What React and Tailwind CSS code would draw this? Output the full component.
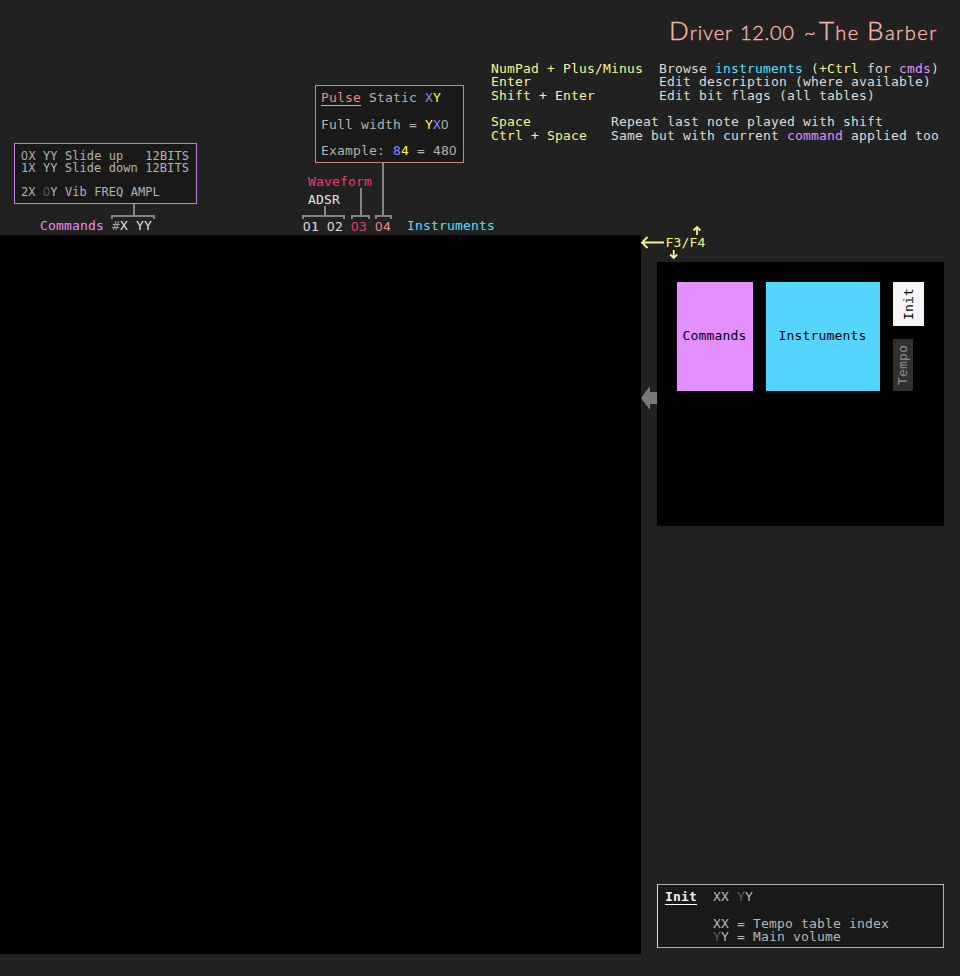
import React from "react";

// Monospaced text whose zeros are drawn plain, without the inner dot.
function Mono({ children, className = "" }) {
  const parts = children.split("0");
  return (
    <span className={className}>
      {parts.map((part, i) => (
        <React.Fragment key={i}>
          {i > 0 && <span className="font-['Noto_Sans',sans-serif] tracking-[0.55px]">0</span>}
          {part}
        </React.Fragment>
      ))}
    </span>
  );
}

function Bracket({ width, height, stem }) {
  const top = height - 4;
  return (
    <svg width={width} height={height} className="block shrink-0" fill="#858585" shapeRendering="crispEdges">
      <rect x={stem} y="0" width="2" height={top} />
      <rect x="0" y={top} width={width} height="2" />
      <rect x="0" y={top} width="2" height="4" />
      <rect x={width - 2} y={top} width="2" height="4" />
    </svg>
  );
}

function CommandsColumn() {
  return (
    <div className="w-[302px] pt-[143px] pl-[14px]">
      <div className="h-[61px] w-[183px] border border-[#c67fe0] bg-[#191919] pt-[6px] pl-[6px] text-[12px] leading-[12px] tracking-[0.08px] text-[#b4b4b4]">
        <div><Mono>0X YY Slide up   12BITS</Mono></div>
        <div><Mono>1X YY Slide down 12BITS</Mono></div>
        <div className="mt-[12px]">
          <Mono>2X </Mono><Mono className="text-[#5c5c5c]">0</Mono><Mono>Y Vib FREQ AMPL</Mono>
        </div>
      </div>
      <div className="pl-[97px]"><Bracket width={44} height={15} stem={22} /></div>
      <div className="pl-[26px] text-[#e48fff]">
        Commands <span className="text-[#e0e0e0]"><span className="text-[#a0a0a0]">#</span>X YY</span>
      </div>
    </div>
  );
}

function InstrumentsColumn() {
  return (
    <div className="w-[189px] pt-[85px]">
      <div className="ml-[13px] h-[78px] w-[149px] border border-[#dc8078] bg-[#191919] pt-[5px] pl-[5px] leading-[13.3px] text-[#b4b4b4]">
        <div><span className="border-b border-[#ff9c90] text-[#f08c84]">Pulse</span> Static <span className="text-[#8888ff]">X</span><span className="text-[#ffff20]">Y</span></div>
        <div className="mt-[13.3px]">Full width = <span className="text-[#ffff20]">Y</span><span className="text-[#8888ff]">X</span><Mono>0</Mono></div>
        <div className="mt-[13.3px]">Example: <span className="text-[#8888ff]">8</span><span className="text-[#ffff20]">4</span> = <Mono>480</Mono></div>
      </div>
      <div className="flex h-[56px]">
        <div className="w-[73px] pt-[12px]">
          <div className="pl-[6px] leading-[13px] text-[#e83c7c]">Waveform</div>
          <div className="flex gap-[6px]">
            <div className="w-[43px]">
              <div className="pt-[5px] pl-[6px] leading-[13px] text-[#e4e4e4]">ADSR</div>
              <Bracket width={43} height={13} stem={22} />
            </div>
            <Bracket width={19} height={31} stem={9} />
          </div>
        </div>
        <Bracket width={17} height={56} stem={7} />
      </div>
      <div className="flex pl-[1px] text-[#e4e4e4]">
        <Mono className="w-[24px] shrink-0">01</Mono>
        <Mono className="w-[24px] shrink-0">02</Mono>
        <Mono className="w-[24px] shrink-0 text-[#e83c7c]">03</Mono>
        <Mono className="w-[32px] shrink-0 text-[#f08c84]">04</Mono>
        <span className="text-[#54e0fa]">Instruments</span>
      </div>
    </div>
  );
}

function Title() {
  return (
    <h1 className="flex h-[62px] w-[271px] items-baseline self-end pt-[15px] font-['Lato',sans-serif] text-[20px] leading-[30px] font-light text-[#ffb4ac] [-webkit-text-stroke:0.35px_#ffb4ac]">
      <span className="w-[71px] shrink-0 tracking-[0.9px]"><span className="text-[26px]">D</span>river</span>
      <span className="w-[64px] shrink-0 tracking-[0.7px]">12.00</span>
      <span className="w-[15px] shrink-0">~</span>
      <span className="w-[48px] shrink-0 tracking-[1.3px]"><span className="text-[26px]">T</span>he</span>
      <span className="tracking-[1.5px]"><span className="text-[26px]">B</span>arber</span>
    </h1>
  );
}

function Shortcuts() {
  return (
    <div className="leading-[13.33px] text-[#dcdcdc]">
      <div><span className="text-[#f6f68e]">NumPad + Plus/Minus</span>  Browse <span className="text-[#54e0fa]">instruments</span> (<span className="text-[#f6f68e]">+Ctrl</span> for <span className="text-[#e48fff]">cmds</span>)</div>
      <div><span className="text-[#f6f68e]">Enter</span>{" ".repeat(16)}Edit description (where available)</div>
      <div><span className="text-[#f6f68e]">Shift + Enter</span>{" ".repeat(8)}Edit bit flags (all tables)</div>
      <div className="mt-[13.33px]"><span className="text-[#f6f68e]">Space</span>{" ".repeat(10)}Repeat last note played with shift</div>
      <div><span className="text-[#f6f68e]">Ctrl + Space</span>{"   "}Same but with current <span className="text-[#e48fff]">command</span> applied too</div>
    </div>
  );
}

function KeyHint() {
  return (
    <div className="-mt-[10px] flex h-[37px] text-[#f6f68e]">
      <svg width="80" height="37" viewBox="0 0 80 37" fill="none" stroke="#f6f68e" strokeWidth="1.8">
        <path d="M23 17.5H1M6.5 12L1 17.5L6.5 23M56 10V2M52.5 5.5L56 2L59.5 5.5M32.7 25V32M29.2 29.5L32.7 33L36.2 29.5" />
        <text x="24.5" y="22" fill="#f6f68e" stroke="none" xmlSpace="preserve">F3/F4</text>
      </svg>
    </div>
  );
}

function TableMap() {
  return (
    <div className="flex">
      <div className="w-[16px] pt-[124px]">
        <svg width="16" height="24" className="block"><path d="M0 12L9 0V6H16V18H9V24Z" fill="#787878" /></svg>
      </div>
      <div className="flex h-[264px] w-[287px] items-start gap-[13px] bg-black pt-[20px] pl-[20px] text-black">
        <div className="flex h-[109px] w-[76px] items-center justify-center bg-[#e48fff] pr-[1px] pb-[2px]">Commands</div>
        <div className="flex h-[109px] w-[114px] items-center justify-center bg-[#54d4ff] pr-[1px] pb-[2px]">Instruments</div>
        <div className="flex flex-col items-start gap-[13px]">
          <div className="flex h-[44px] w-[31px] rotate-180 items-center justify-center bg-[#f6f6f6] leading-[14px] [writing-mode:vertical-rl]">Init</div>
          <div className="flex h-[52px] w-[20px] rotate-180 items-center justify-center bg-[#303030] leading-[14px] text-[#909090] [writing-mode:vertical-rl]">Tempo</div>
        </div>
      </div>
    </div>
  );
}

function InitBox() {
  return (
    <div className="mt-auto mr-[16px] ml-[16px] h-[64px] border border-[#b0b0b0] border-l-[#dedede] bg-[#191919] pt-[5px] pl-[7px] leading-[13.3px] text-[#b8b8b8]">
      <div><span className="border-b border-white font-bold text-[#f0f0f0]">Init</span>  XX <span className="text-[#5c5c5c]">Y</span>Y</div>
      <div className="mt-[13.3px]">{" ".repeat(6)}XX = Tempo table index</div>
      <div>{" ".repeat(6)}<span className="text-[#5c5c5c]">Y</span>Y = Main volume</div>
    </div>
  );
}

export default function App() {
  return (
    <div className="h-[976px] w-[960px] overflow-hidden bg-[#212121] font-['DejaVu_Sans_Mono',monospace] text-[13px] leading-[14px] tracking-[0.174px] whitespace-pre">
      <div className="flex h-[235px]">
        <CommandsColumn />
        <InstrumentsColumn />
        <div className="flex w-[449px] flex-col">
          <Title />
          <Shortcuts />
        </div>
      </div>
      <div className="flex h-[719px]">
        <div className="w-[641px] bg-black" />
        <div className="flex h-[713px] flex-1 flex-col">
          <KeyHint />
          <TableMap />
          <InitBox />
        </div>
      </div>
    </div>
  );
}
